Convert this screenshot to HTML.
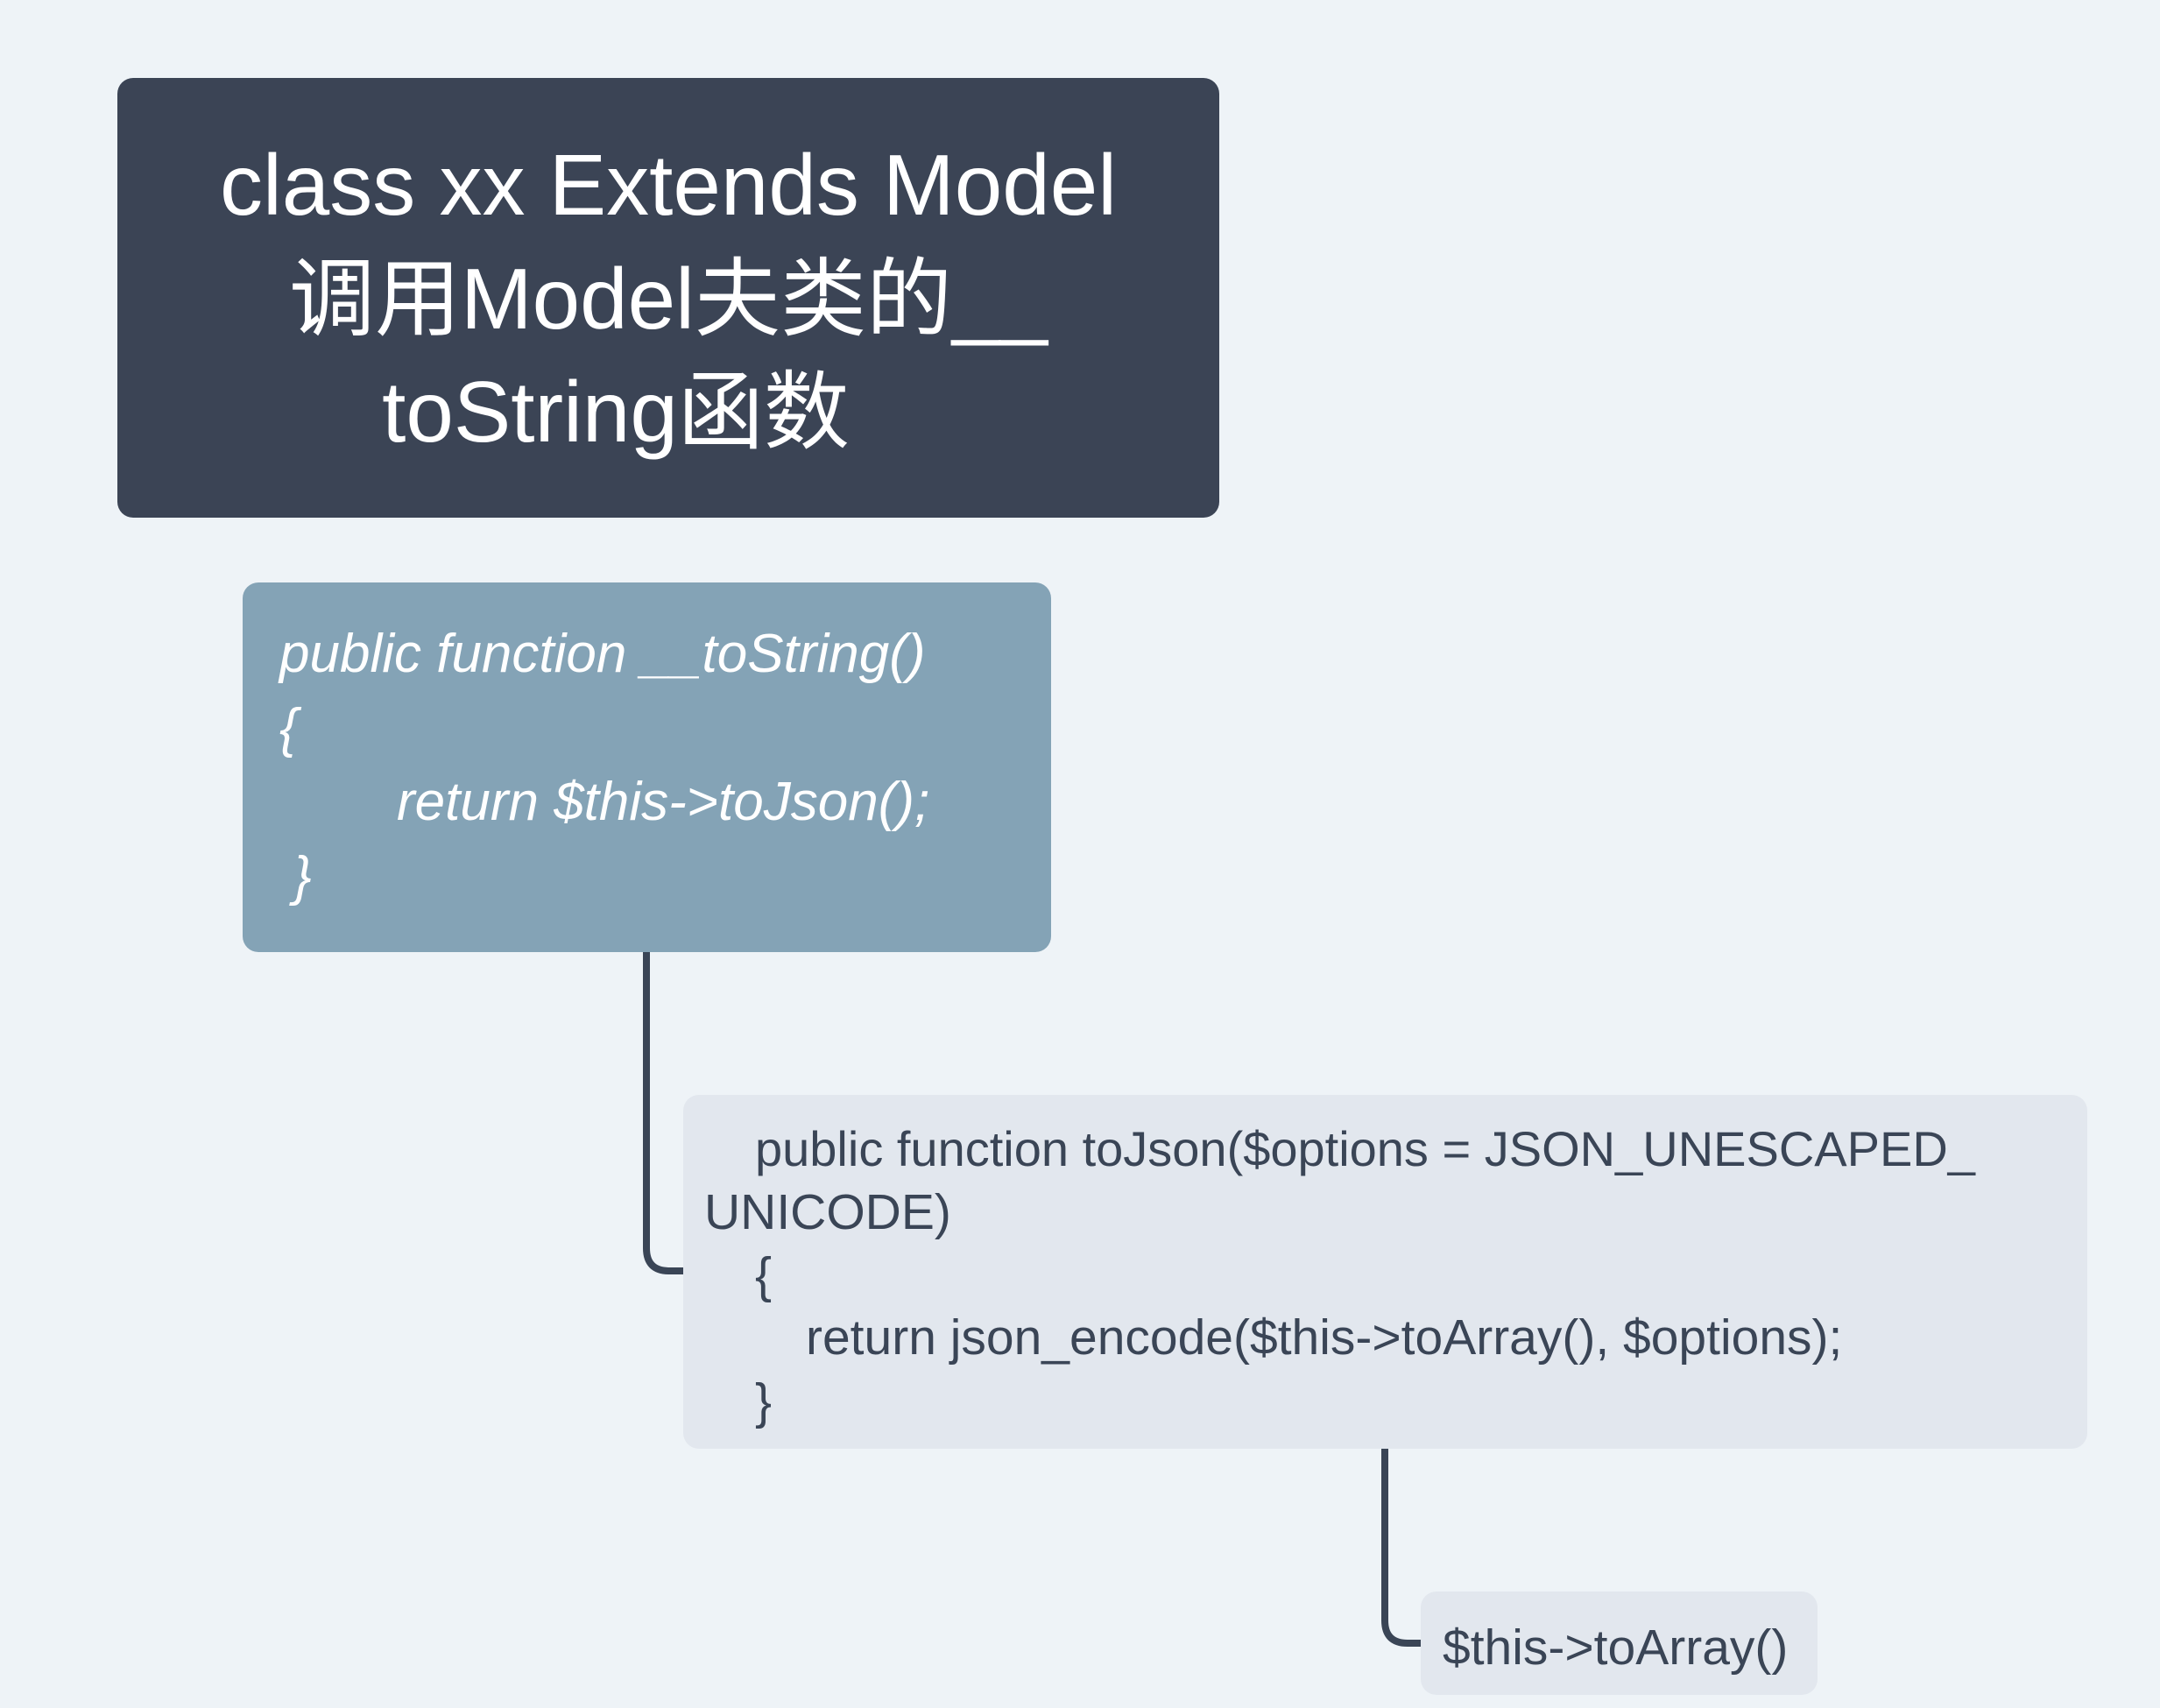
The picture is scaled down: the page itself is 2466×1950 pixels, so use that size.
<!DOCTYPE html>
<html><head><meta charset="utf-8"><style>
html,body{margin:0;padding:0}
body{width:2466px;height:1950px;background:#eef3f7;position:relative;overflow:hidden;font-family:"Liberation Sans","Noto Sans CJK SC",sans-serif}
.b{position:absolute}
.t{position:absolute;white-space:pre;line-height:1}
</style></head><body>
<div class="b" style="left:134px;top:89px;width:1258px;height:502px;background:#3b4455;border-radius:18px"></div>
<div class="b" style="left:277px;top:665px;width:923px;height:422px;background:#84a3b6;border-radius:18px"></div>
<div class="b" style="left:780px;top:1250px;width:1603px;height:404px;background:#e2e7ee;border-radius:18px"></div>
<div class="b" style="left:1622px;top:1817px;width:453px;height:118px;background:#e2e7ee;border-radius:18px"></div>
<svg class="b" style="left:0;top:0" width="2466" height="1950">
<path d="M738 1087 V1425 Q738 1451 764 1451 H780" fill="none" stroke="#3a4556" stroke-width="8"/>
<path d="M1581 1654 V1850 Q1581 1876 1607 1876 H1622" fill="none" stroke="#3a4556" stroke-width="8"/>
</svg>
<div class="t" style="left:134px;width:1258px;text-align:center;top:162px;font-size:98px;color:#fff">class xx Extends Model</div>
<div class="t" style="left:134px;width:1258px;text-align:center;top:292px;font-size:98px;color:#fff">调用Model夫类的__</div>
<div class="t" style="left:74px;width:1258px;text-align:center;top:421px;font-size:98px;color:#fff">toString函数</div>
<div class="t" style="left:319px;top:716px;font-size:62px;color:#fff;font-style:italic">public function __toString()</div>
<div class="t" style="left:319px;top:801px;font-size:62px;color:#fff;font-style:italic">{</div>
<div class="t" style="left:453px;top:885px;font-size:62px;color:#fff;font-style:italic">return $this-&gt;toJson();</div>
<div class="t" style="left:335px;top:970px;font-size:62px;color:#fff;font-style:italic">}</div>
<div class="t" style="left:862px;top:1284px;font-size:56px;color:#3a4556">public function toJson($options = JSON_UNESCAPED_</div>
<div class="t" style="left:804px;top:1356px;font-size:57px;color:#3a4556">UNICODE)</div>
<div class="t" style="left:862px;top:1428px;font-size:57px;color:#3a4556">{</div>
<div class="t" style="left:920px;top:1499px;font-size:57px;color:#3a4556">return json_encode($this-&gt;toArray(), $options);</div>
<div class="t" style="left:862px;top:1572px;font-size:57px;color:#3a4556">}</div>
<div class="t" style="left:1647px;top:1853px;font-size:57px;color:#3a4556">$this-&gt;toArray()</div>
</body></html>
